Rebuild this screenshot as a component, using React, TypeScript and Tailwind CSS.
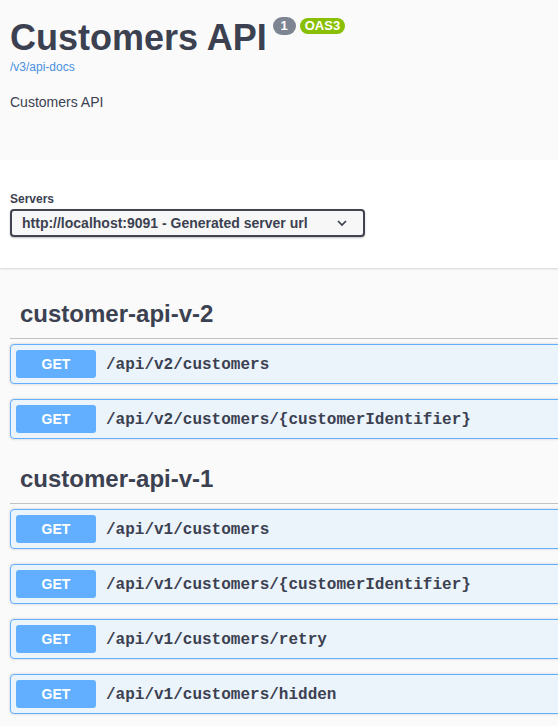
const tags = [
  {
    name: "customer-api-v-2",
    paths: ["/api/v2/customers", "/api/v2/customers/{customerIdentifier}"],
  },
  {
    name: "customer-api-v-1",
    paths: [
      "/api/v1/customers",
      "/api/v1/customers/{customerIdentifier}",
      "/api/v1/customers/retry",
      "/api/v1/customers/hidden",
    ],
  },
];

const sans = "font-['Liberation_Sans',Arial,sans-serif]";

function OpBlock({ path }: { path: string }) {
  return (
    <div className="mb-[15px] flex h-10 items-center rounded-[4px] border border-[#61affe] bg-[#ebf3fb] p-[5px] shadow-[0_0_3px_rgba(0,0,0,0.19)]">
      <span
        className={`${sans} flex h-7 w-20 shrink-0 items-center justify-center rounded-[3px] bg-[#61affe] text-[14px] font-bold text-white`}
      >
        GET
      </span>
      <span className="pt-[2px] pl-[10px] font-['Liberation_Mono','Courier_New',monospace] text-[16px] font-bold text-[#3b4151]">
        {path}
      </span>
    </div>
  );
}

export default function App() {
  return (
    <div className={`${sans} min-h-screen w-full overflow-hidden bg-[#fafafa] text-[#3b4151]`}>
      <div className="w-[1000px]">
        <div className="h-40 px-[10px] pt-[16px]">
          <div className="flex items-start">
            <h2 className="text-[36px] leading-[44px] font-bold text-[#3b4151]">Customers API</h2>
            <span className="mt-[1px] ml-[6px] flex h-[18px] min-w-[23px] items-center justify-center rounded-full bg-[#7d8492] px-[6px] text-[13px] font-bold text-white">
              1
            </span>
            <span className="mt-[2px] ml-[4px] flex h-[16px] items-center rounded-full bg-[#89bf04] px-[5px] text-[13px] font-bold text-white">
              OAS3
            </span>
          </div>
          <a className="block text-[12px] leading-[15px] text-[#4990e2]">/v3/api-docs</a>
          <p className="mt-[19px] text-[14px] leading-[17px]">Customers API</p>
        </div>

        <div className="h-[108px] bg-white px-[10px] pt-[32px] shadow-[0_1px_2px_0_rgba(0,0,0,0.15)]">
          <div className="text-[12px] leading-[15px] font-bold">Servers</div>
          <div className="mt-[2px] flex h-7 w-[355px] items-center justify-between rounded-[4px] border-2 border-[#41444e] bg-[#f7f7f7] pr-[15px] pl-[10px] text-[14px] font-bold shadow-[0_1px_2px_0_rgba(0,0,0,0.25)]">
            <span>http://localhost:9091 - Generated server url</span>
            <svg width="12" height="8" viewBox="0 0 12 8" fill="none">
              <path d="M2 2 L6 6 L10 2" stroke="#3b4151" strokeWidth="1.75" />
            </svg>
          </div>
        </div>

        <div className="px-[10px] pt-[21px]">
          {tags.map((tag) => (
            <section key={tag.name}>
              <h3 className="mb-[5px] border-b border-[rgba(59,65,81,0.3)] py-[10px] pl-[10px] text-[24px] leading-[29px] font-bold">
                {tag.name}
              </h3>
              {tag.paths.map((p) => (
                <OpBlock key={p} path={p} />
              ))}
            </section>
          ))}
        </div>
      </div>
    </div>
  );
}
